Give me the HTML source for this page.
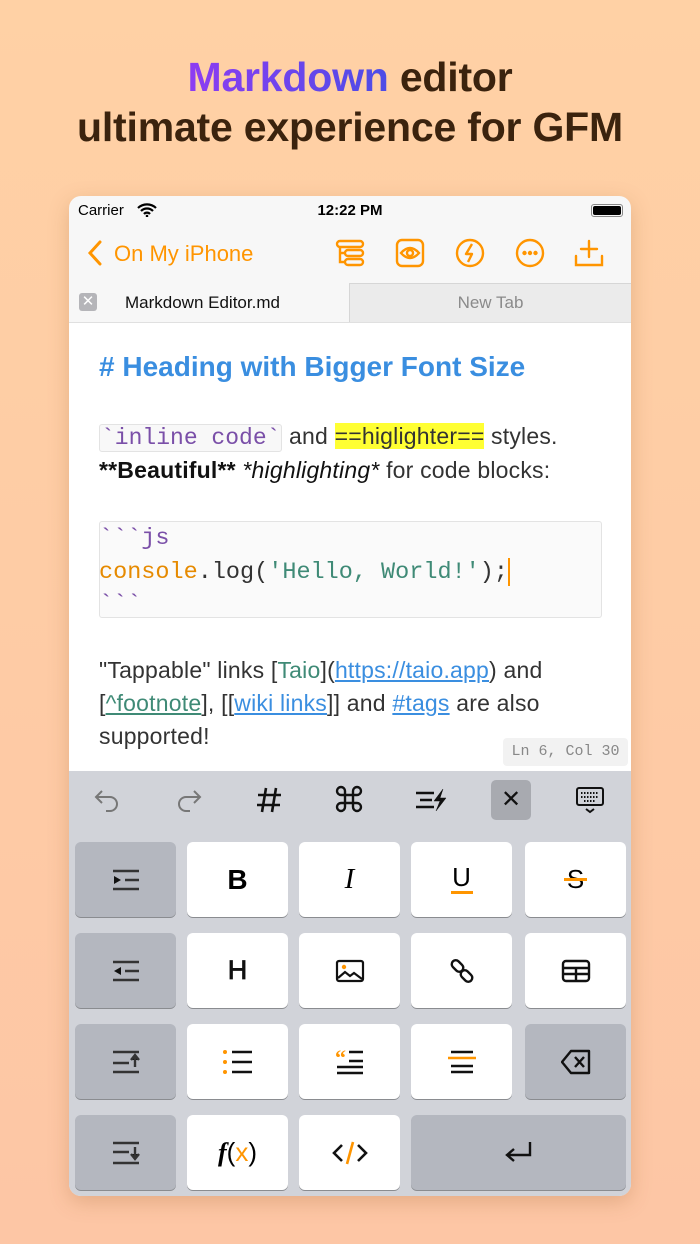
<!DOCTYPE html>
<html><head><meta charset="utf-8"><style>
*{margin:0;padding:0;box-sizing:border-box}
body{width:700px;height:1244px;overflow:hidden;background:linear-gradient(#ffd1a5,#fdc6a5);font-family:"Liberation Sans",sans-serif;position:relative}
.t{position:absolute;left:0;width:700px;text-align:center;font-size:41px;font-weight:bold;color:#3b230e;letter-spacing:-0.2px}
.ph{position:absolute;left:69px;top:196px;width:562px;height:1000px;border-radius:12px;overflow:hidden;background:#f7f7f7;box-shadow:0 6px 20px rgba(150,90,40,.25)}
.a{position:absolute}
.or{color:#ff9500}
.key{position:absolute;width:101px;height:75px;border-radius:6px;background:#fff;box-shadow:0 1px 0 #8a8c90;display:flex;align-items:center;justify-content:center}
.g{background:#b4b7bf}
.mono{font-family:"Liberation Mono",monospace}
.tx{position:absolute;left:30px;font-size:23px;color:#333;white-space:nowrap;letter-spacing:0.2px}
.cd{font-size:23.5px;letter-spacing:0}
</style></head><body>
<div class="t" style="top:54px"><span style="background:linear-gradient(90deg,#8e3cf2,#4c4de6);-webkit-background-clip:text;color:transparent">Markdown</span> editor</div>
<div class="t" style="top:104px">ultimate experience for GFM</div>
<div class="ph">
 <div class="a" style="left:9px;top:6px;font-size:15px">Carrier</div>
 <svg class="a" style="left:68px;top:7px" width="20" height="14" viewBox="0 0 20 14"><path d="M1 5a13 13 0 0 1 18 0M4 8a8.5 8.5 0 0 1 12 0M7 11a4 4 0 0 1 6 0" stroke="#000" stroke-width="2.2" fill="none"/><circle cx="10" cy="13" r="1.3"/></svg>
 <div class="a" style="left:0;width:562px;text-align:center;top:6px;font-size:15px;font-weight:bold">12:22 PM</div>
 <div class="a" style="left:522px;top:8px;width:32px;height:13px;border:1px solid #888;border-radius:3px;padding:1px"><div style="background:#000;height:100%;border-radius:2px"></div></div>
 <svg class="a" style="left:18px;top:44px" width="16" height="26"><path d="M13 2 3 13l10 11" stroke="#ff9500" stroke-width="3" fill="none" stroke-linecap="round"/></svg>
 <div class="a or" style="left:45px;top:45px;font-size:22px">On My iPhone</div>
 <svg class="a" style="left:266px;top:42px" width="30" height="30" viewBox="0 0 30 30" fill="none" stroke="#ff9500" stroke-width="2.4"><rect x="2" y="3" width="26" height="6" rx="3"/><rect x="10" y="12" width="18" height="6" rx="3"/><rect x="10" y="21" width="18" height="6" rx="3"/><path d="M5 9v15h5M5 15h5"/></svg>
 <svg class="a" style="left:326px;top:42px" width="30" height="30" viewBox="0 0 30 30" fill="none" stroke="#ff9500" stroke-width="2.4"><rect x="2" y="2" width="26" height="26" rx="5"/><path d="M6 15q9-10 18 0q-9 10-18 0z"/><circle cx="15" cy="15" r="3"/></svg>
 <svg class="a" style="left:386px;top:42px" width="30" height="30" viewBox="0 0 30 30" fill="none" stroke="#ff9500" stroke-width="2.4"><circle cx="15" cy="15" r="13"/><path d="M17 6l-6 10h6l-4 8" stroke-linejoin="round"/></svg>
 <svg class="a" style="left:446px;top:42px" width="30" height="30" viewBox="0 0 30 30" fill="none" stroke="#ff9500" stroke-width="2.4"><circle cx="15" cy="15" r="13"/><circle cx="9.5" cy="15" r="1" fill="#ff9500"/><circle cx="15" cy="15" r="1" fill="#ff9500"/><circle cx="20.5" cy="15" r="1" fill="#ff9500"/></svg>
 <svg class="a" style="left:505px;top:42px" width="30" height="30" viewBox="0 0 30 30" fill="none" stroke="#ff9500" stroke-width="2.4" stroke-linecap="round"><path d="M15 3v16M7 11h16M2 18v9h26v-9"/></svg>
 <div class="a" style="left:280px;top:87px;width:282px;height:39px;background:#ebebeb;border-left:1px solid #d6d6d6;border-top:1px solid #d6d6d6;text-align:center;line-height:38px;font-size:17px;color:#8a8a8a">New Tab</div>
 <div class="a" style="left:10px;top:97px;width:18px;height:18px;background:#b5b5b9;border-radius:3px;color:#fff;font-size:15px;text-align:center;line-height:18px">✕</div>
 <div class="a" style="left:56px;top:97px;font-size:17px;color:#111">Markdown Editor.md</div>
 <div class="a" style="left:0;top:126px;width:562px;height:449px;background:#fff;border-top:1px solid #e0e0e0">
  <div class="tx" style="top:28px;font-size:28px;font-weight:bold;color:#3a8ee0;letter-spacing:0">#&nbsp;Heading with Bigger Font Size</div>
  <div class="tx" style="top:100px"><span class="mono" style="color:#7a4fa8;border:1px solid #e3e3e3;background:#f8f8f8;border-radius:3px;padding:0 1px;font-size:23px;letter-spacing:0">&#96;inline code&#96;</span> and <span style="background:#ffff33;color:#333">==higlighter==</span> styles.</div>
  <div class="tx" style="top:134px;color:#111"><b>**Beautiful**</b> <i>*highlighting*</i> <span style="color:#333">for code blocks:</span></div>
  <div class="a" style="left:30px;top:198px;width:503px;height:97px;background:#fafafa;border:1px solid #e3e3e3;border-radius:3px"></div>
  <div class="tx mono cd" style="top:202px;color:#7a4fa8">&#96;&#96;&#96;js</div>
  <div class="tx mono cd" style="top:235px;color:#333"><span style="color:#e68a00">console</span>.log(<span style="color:#3f8a76">'Hello, World!'</span>);<span style="display:inline-block;width:2px;height:28px;background:#ff9500;vertical-align:middle"></span></div>
  <div class="tx mono cd" style="top:268px;color:#7a4fa8">&#96;&#96;&#96;</div>
  <div class="tx" style="top:334px">"Tappable" links [<span style="color:#3f8a76">Taio</span>](<u style="color:#3a8ee0">https://taio.app</u>) and</div>
  <div class="tx" style="top:367px">[<u style="color:#3f8a76">^footnote</u>], [[<u style="color:#3a8ee0">wiki links</u>]] and <u style="color:#3a8ee0">#tags</u> are also</div>
  <div class="tx" style="top:400px">supported!</div>
  <div class="a mono" style="left:434px;top:415px;width:125px;height:28px;background:#f2f2f2;border-radius:4px;font-size:15px;color:#888;text-align:center;line-height:28px">Ln 6, Col 30</div>
 </div>
 <div class="a" style="left:0;top:575px;width:562px;height:425px;background:#d1d3d9">
  <svg class="a" style="left:24px;top:14px" width="30" height="30" viewBox="0 0 30 30" fill="none" stroke="#777" stroke-width="2"><path d="M9 6 3 12l6 6M3 12h14a7 7 0 0 1 0 14h-4"/></svg>
  <svg class="a" style="left:104px;top:14px" width="30" height="30" viewBox="0 0 30 30" fill="none" stroke="#777" stroke-width="2"><path d="M21 6l6 6-6 6M27 12H13a7 7 0 0 0 0 14h4"/></svg>
  <svg class="a" style="left:186px;top:14px" width="28" height="30" viewBox="0 0 28 30" stroke="#111" stroke-width="2.6" fill="none"><path d="M11 3 7 27M21 3l-4 24M3 10h23M2 20h23"/></svg>
  <svg class="a" style="left:266px;top:14px" width="28" height="28" viewBox="0 0 28 28" stroke="#111" stroke-width="2.4" fill="none"><path d="M10 10h8v8h-8zM10 10V6a4 4 0 1 0-4 4h16a4 4 0 1 0-4-4v16a4 4 0 1 0 4-4H6a4 4 0 1 0 4 4z"/></svg>
  <svg class="a" style="left:345px;top:14px" width="34" height="30" viewBox="0 0 34 30" stroke="#111" stroke-width="2.4" fill="none"><path d="M2 8h18M6 15h12M2 22h18"/><path d="M29 4l-9 12h6l-4 10 10-13h-6z" fill="#111" stroke-width="0.5"/></svg>
  <div class="a" style="left:422px;top:9px;width:40px;height:40px;background:#a8aab0;border-radius:5px;text-align:center;line-height:40px;font-size:24px;color:#111">✕</div>
  <svg class="a" style="left:506px;top:15px" width="30" height="28" viewBox="0 0 30 28" fill="none" stroke="#111" stroke-width="2"><rect x="2" y="2" width="26" height="17" rx="2"/><path d="M6 7h18M6 11h18M9 15h12" stroke-dasharray="1.5 1.5"/><path d="M11 23l4 3 4-3"/></svg>
 </div>
 <div class="key g" style="left:6px;top:646px"><svg width="30" height="24" viewBox="0 0 30 24" stroke="#333" stroke-width="2.4"><path d="M2 3h26M14 12h14M2 21h26"/><path d="M3 8l7 4-7 4z" fill="#111" stroke="none"/></svg></div>
 <div class="key" style="left:118px;top:646px;font-size:28px;font-weight:bold">B</div>
 <div class="key" style="left:230px;top:646px;font-size:29px;font-style:italic;font-family:'Liberation Serif',serif">I</div>
 <div class="key" style="left:342px;top:646px;font-size:26px;flex-direction:column"><span style="line-height:24px">U</span><span style="width:22px;height:3px;background:#ff9500;margin-top:2px"></span></div>
 <div class="key" style="left:456px;top:646px;font-size:26px"><span style="position:relative">S<span style="position:absolute;left:-3px;right:-3px;top:14px;height:3px;background:#ff9500"></span></span></div>
 <div class="key g" style="left:6px;top:737px"><svg width="30" height="24" viewBox="0 0 30 24" stroke="#333" stroke-width="2.4"><path d="M2 3h26M14 12h14M2 21h26"/><path d="M10 8l-7 4 7 4z" fill="#111" stroke="none"/></svg></div>
 <div class="key" style="left:118px;top:737px;font-size:27px;font-weight:bold;color:#111"><span style="font-weight:normal;-webkit-text-stroke:0.8px #111">H</span></div>
 <div class="key" style="left:230px;top:737px"><svg width="30" height="24" viewBox="0 0 30 24" fill="none" stroke="#111" stroke-width="2.2"><rect x="2" y="2" width="26" height="20" rx="2"/><path d="M3 19l7-6 5 4 4-3 8 6"/><circle cx="9" cy="8" r="2.2" fill="#ff9500" stroke="none"/></svg></div>
 <div class="key" style="left:342px;top:737px"><svg width="28" height="28" viewBox="0 0 28 28" fill="none" stroke="#111" stroke-width="2.4"><rect x="3" y="5" width="13" height="8" rx="4" transform="rotate(45 9.5 9)"/><rect x="12" y="15" width="13" height="8" rx="4" transform="rotate(45 18.5 19)"/></svg></div>
 <div class="key" style="left:456px;top:737px"><svg width="30" height="24" viewBox="0 0 30 24" fill="none" stroke="#111" stroke-width="2.4"><rect x="2" y="2" width="26" height="20" rx="3"/><path d="M2 9h26M2 15h26M15 9v13"/></svg></div>
 <div class="key g" style="left:6px;top:828px"><svg width="30" height="26" viewBox="0 0 30 26" stroke="#333" stroke-width="2.4"><path d="M2 3h26M2 14h16M2 23h26"/><path d="M24 18V7M20 11l4-5 4 5" fill="#111"/></svg></div>
 <div class="key" style="left:118px;top:828px"><svg width="32" height="26" viewBox="0 0 32 26" stroke="#111" stroke-width="2.6"><path d="M10 3h20M10 13h20M10 23h20"/><g fill="#ff9500" stroke="none"><circle cx="3" cy="3" r="2"/><circle cx="3" cy="13" r="2"/><circle cx="3" cy="23" r="2"/></g></svg></div>
 <div class="key" style="left:230px;top:828px"><svg width="30" height="26" viewBox="0 0 30 26" stroke="#111" stroke-width="2.4"><path d="M14 3h14M14 12h14M2 18h26M2 24h26"/><text x="0" y="16" font-size="22" font-weight="bold" fill="#ff9500" stroke="none" font-family="Liberation Serif">“</text></svg></div>
 <div class="key" style="left:342px;top:828px"><svg width="30" height="26" viewBox="0 0 30 26" stroke="#111" stroke-width="2.4"><path d="M4 3h22M4 23h22M4 17h22"/><path d="M1 9h28" stroke="#ff9500"/></svg></div>
 <div class="key g" style="left:456px;top:828px"><svg width="30" height="26" viewBox="0 0 30 26" fill="none" stroke="#111" stroke-width="2.4" stroke-linejoin="round"><path d="M10 2h18v22H10L1 13z"/><path d="M14 8l9 10M23 8l-9 10"/></svg></div>
 <div class="key g" style="left:6px;top:919px"><svg width="30" height="26" viewBox="0 0 30 26" stroke="#333" stroke-width="2.4"><path d="M2 3h26M2 12h16M2 23h26"/><path d="M24 7v11M20 14l4 5 4-5" fill="#111"/></svg></div>
 <div class="key" style="left:118px;top:919px;font-size:26px;font-family:'Liberation Serif',serif"><i style="font-weight:bold">f</i><span style="font-family:'Liberation Sans'">(<span class="or">x</span>)</span></div>
 <div class="key" style="left:230px;top:919px"><svg width="36" height="26" viewBox="0 0 36 26" fill="none" stroke="#111" stroke-width="2.6"><path d="M10 5 2 13l8 8M26 5l8 8-8 8"/><path d="M21 2l-6 22" stroke="#ff9500"/></svg></div>
 <div class="key g" style="left:342px;top:919px;width:215px"><svg width="30" height="26" viewBox="0 0 30 26" fill="none" stroke="#111" stroke-width="2.4"><path d="M26 2v13H4M10 9l-7 6 7 6"/></svg></div>
</div>
</body></html>
